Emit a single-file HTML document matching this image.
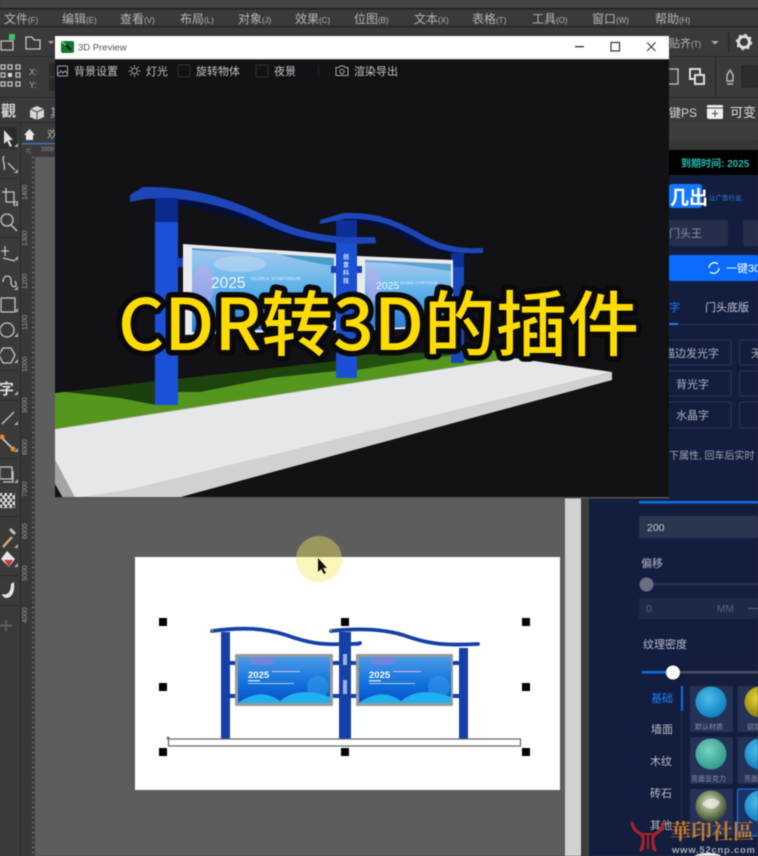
<!DOCTYPE html>
<html lang="zh"><head><meta charset="utf-8"><title>CDR转3D的插件</title>
<style>
html,body{margin:0;padding:0;background:#3a3a3a;width:758px;height:856px;overflow:hidden}
svg{display:block;position:absolute;left:0;top:0;filter:blur(.6px)}
text{font-family:"Liberation Sans","Noto Sans CJK SC",sans-serif}
.m{font-size:12px;fill:#b4b4b4}
.r{font-size:7px;fill:#9a9a9a}
.p{font-size:11px;fill:#b9bcc8}
.ic{fill:none;stroke:#c4c4c4;stroke-width:1.3}
</style></head><body>
<svg width="758" height="856" viewBox="0 0 758 856" xmlns="http://www.w3.org/2000/svg">
<defs>
<linearGradient id="bd" x1="0" y1="0" x2="0" y2="1"><stop offset="0" stop-color="#a9c6ee"/><stop offset=".3" stop-color="#78bdec"/><stop offset=".6" stop-color="#4aa6e8"/><stop offset="1" stop-color="#2b78d8"/></linearGradient>
<linearGradient id="bd2" x1="0" y1="0" x2="0" y2="1"><stop offset="0" stop-color="#4a9be8"/><stop offset=".6" stop-color="#0f6fdc"/><stop offset="1" stop-color="#0a4fc4"/></linearGradient>
<radialGradient id="s1" cx=".42" cy=".38" r=".62"><stop offset="0" stop-color="#4cbce8"/><stop offset="1" stop-color="#0f80c4"/></radialGradient>
<radialGradient id="s2" cx=".42" cy=".38" r=".62"><stop offset="0" stop-color="#e8d83a"/><stop offset="1" stop-color="#8a7c08"/></radialGradient>
<radialGradient id="s3" cx=".42" cy=".38" r=".62"><stop offset="0" stop-color="#78d4c4"/><stop offset="1" stop-color="#329a8c"/></radialGradient>
<radialGradient id="s4" cx=".45" cy=".4" r=".6"><stop offset="0" stop-color="#d8e0cc"/><stop offset=".6" stop-color="#7c8c62"/><stop offset="1" stop-color="#3d4a32"/></radialGradient>
<clipPath id="win"><rect x="55" y="59" width="614" height="439"/></clipPath>
<filter id="noise" x="0" y="0" width="100%" height="100%"><feTurbulence type="fractalNoise" baseFrequency=".9" numOctaves="2" seed="4"/><feColorMatrix values="0 0 0 0 .1  0 0 0 0 .25  0 0 0 0 .05  0 0 0 1.1 -.5"/><feComposite in2="SourceGraphic" operator="in"/><feMerge><feMergeNode in="SourceGraphic"/><feMergeNode/></feMerge></filter>
</defs>

<!-- app chrome -->
<rect width="758" height="856" fill="#3a3a3a"/>
<rect y="0" width="758" height="8" fill="#444"/>
<rect y="8" width="758" height="1.5" fill="#1f1f1f"/>
<rect y="26" width="758" height="1.5" fill="#262626"/>
<rect y="56" width="758" height="1" fill="#2a2a2a"/>
<rect y="97" width="758" height="1" fill="#2a2a2a"/>
<rect y="122" width="758" height="1.5" fill="#2a2a2a"/>
<g class="m">
<text x="4" y="23" class="m">文件<tspan font-size="8">(F)</tspan></text>
<text x="62" y="23" class="m">编辑<tspan font-size="8">(E)</tspan></text>
<text x="120" y="23" class="m">查看<tspan font-size="8">(V)</tspan></text>
<text x="180" y="23" class="m">布局<tspan font-size="8">(L)</tspan></text>
<text x="238" y="23" class="m">对象<tspan font-size="8">(J)</tspan></text>
<text x="295" y="23" class="m">效果<tspan font-size="8">(C)</tspan></text>
<text x="354" y="23" class="m">位图<tspan font-size="8">(B)</tspan></text>
<text x="414" y="23" class="m">文本<tspan font-size="8">(X)</tspan></text>
<text x="472" y="23" class="m">表格<tspan font-size="8">(T)</tspan></text>
<text x="532" y="23" class="m">工具<tspan font-size="8">(O)</tspan></text>
<text x="592" y="23" class="m">窗口<tspan font-size="8">(W)</tspan></text>
<text x="655" y="23" class="m">帮助<tspan font-size="8">(H)</tspan></text>
</g>
<!-- top toolbar left -->
<path class="ic" d="M1 41h8l4 0v9H1z"/><rect x="9" y="34" width="6" height="6" fill="#3fc060"/>
<path class="ic" stroke-width="1.8" d="M26 37h6l2 3h6v9H26z"/>
<path d="M48 41h6l-3 3z" fill="#aaa"/>
<g class="ic" stroke-width="1"><rect x="1" y="65" width="4" height="4"/><rect x="8" y="65" width="4" height="4"/><rect x="16" y="65" width="4" height="4"/><rect x="1" y="73" width="4" height="4"/><rect x="16" y="73" width="4" height="4"/><rect x="1" y="82" width="4" height="4"/><rect x="8" y="82" width="4" height="4"/><rect x="16" y="82" width="4" height="4"/></g>
<rect x="8" y="73" width="4" height="4" fill="#ddd"/>
<text x="29" y="75" font-size="9" fill="#aaa">X:</text><text x="29" y="88" font-size="9" fill="#aaa">Y:</text>
<rect x="49" y="63" width="6" height="13" fill="#2a2a2a"/><rect x="49" y="78" width="6" height="13" fill="#2a2a2a"/>
<text x="1" y="116" font-size="15" font-weight="700" fill="#d8d8d8">觀</text>
<path d="M37 106l7 3v8l-7 3-7-3v-8z" fill="#d6d6d6"/><path d="M30 109l7 3 7-3M37 112v8" stroke="#444" fill="none"/>
<text x="50" y="117" font-size="12" fill="#8ac">其</text>
<!-- top toolbar right -->
<text x="669" y="47" font-size="11" fill="#b4b4b4">贴齐<tspan font-size="8">(T)</tspan></text>
<path d="M711 41h8l-4 3.5z" fill="#aaa"/>
<rect x="728" y="32" width="1.5" height="20" fill="#2a2a2a"/>
<circle cx="744" cy="42" r="5.5" fill="none" stroke="#ddd" stroke-width="3"/><circle cx="744" cy="42" r="7.5" fill="none" stroke="#ddd" stroke-width="1.5" stroke-dasharray="2.5 3.4"/>
<path class="ic" d="M669 69h9v15h-9"/><rect x="690" y="69" width="10" height="10" fill="none" stroke="#ddd" stroke-width="2"/><rect x="695" y="75" width="9" height="9" fill="#3a3a3a" stroke="#ddd" stroke-width="2"/>
<rect x="715" y="56" width="1.5" height="40" fill="#2a2a2a"/>
<path d="M730 70l3 5v6h-6v-6zM727 84h6" fill="none" stroke="#bbb" stroke-width="1.4"/>
<rect x="742" y="66" width="16" height="21" rx="1" fill="#2c2c2c" stroke="#222"/>
<text x="669" y="117" font-size="12" fill="#cfd8dc">键PS</text>
<path d="M708 105h14a1 1 0 011 1v11a2 2 0 01-2 2h-12a2 2 0 01-2-2v-11a1 1 0 011-1z" fill="#eee"/><path d="M707 108h16M715 110v7M712 113.500h6" stroke="#444" fill="none"/>
<text x="730" y="117" font-size="13" fill="#ddd">可变</text>
<rect x="669" y="122" width="89" height="22" fill="#3d3d3d"/>

<!-- left tools -->
<rect x="0" y="123" width="21" height="733" fill="#3a3a3a"/>
<rect x="20" y="123" width="1.500" height="733" fill="#2a2a2a"/>
<rect x="0" y="127" width="17" height="22" fill="#2b2b2b"/>
<path d="M4 130l0 14 3-3 3 6 2-1-3-6 4 0z" fill="#ddd"/>
<g class="ic" stroke-width="1.500">
<path d="M4 156c-3 4 2 8 0 14M8 163l7 7"/>
<path d="M6 188v14h12M2 192h12v14"/>
<circle cx="7" cy="220" r="6"/><path d="M11 225l6 6"/>
<path d="M5 246v10M1 251h8M3 258l12 3"/>
<path d="M3 282c0-8 9-8 8 0 0 7 8 6 4-1"/>
<rect x="1" y="298" width="14" height="14"/>
<circle cx="7" cy="330" r="7"/>
<path d="M3 348h8l4 7-4 8H3l-4-8z"/>
<path d="M2 424l12-12"/>
<path d="M2 438l11 11" stroke-width="1.800"/>
<rect x="0" y="467" width="12" height="12"/><path d="M13 471v11H3"/>
<path d="M3 547l9-10" stroke="#d8a070" stroke-width="2.500"/><path d="M10 529l5 5" stroke-width="3"/>
</g>
<circle cx="2" cy="437" r="2.500" fill="#e88a2a"/><circle cx="13" cy="449" r="2.500" fill="#e88a2a"/>
<text x="-1" y="394" font-size="15" font-weight="700" fill="#ddd">字</text>
<rect x="0" y="493" width="15" height="15" fill="#ddd"/>
<g fill="#3a3a3a"><rect x="2" y="493" width="2.500" height="2.500"/><rect x="7" y="493" width="2.500" height="2.500"/><rect x="12" y="493" width="2.500" height="2.500"/><rect x="0" y="496" width="2.500" height="2.500"/><rect x="5" y="496" width="2.500" height="2.500"/><rect x="10" y="496" width="2.500" height="2.500"/><rect x="2" y="499" width="2.500" height="2.500"/><rect x="7" y="499" width="2.500" height="2.500"/><rect x="12" y="499" width="2.500" height="2.500"/><rect x="0" y="502" width="2.500" height="2.500"/><rect x="5" y="502" width="2.500" height="2.500"/><rect x="10" y="502" width="2.500" height="2.500"/><rect x="2" y="505" width="2.500" height="2.500"/><rect x="7" y="505" width="2.500" height="2.500"/><rect x="12" y="505" width="2.500" height="2.500"/></g>
<path d="M7 551l8 8-6 8-8-8z" fill="#e4e4e4"/><path d="M4 560h9l-4 7z" fill="#c83a3a"/>
<path d="M2 594c6 2 9-3 9-10l3-2c1 8-1 15-7 16-3 0-5-2-5-4z" fill="#e4e4e4"/>
<path d="M6 620v11M0 625.500h12" stroke="#5e5e5e" stroke-width="2"/>
<g fill="#2a2a2a"><rect y="178" width="18" height="1"/><rect y="237" width="18" height="1"/><rect y="370" width="18" height="1"/><rect y="400" width="18" height="1"/><rect y="458" width="18" height="1"/><rect y="516" width="18" height="1"/><rect y="575" width="18" height="1"/><rect y="605" width="18" height="1"/></g>
<g fill="#aaa"><path d="M18 147v-4l-4 4zM18 173v-4l-4 4zM18 206v-4l-4 4zM18 260v-4l-4 4zM18 290v-4l-4 4zM18 312v-4l-4 4zM18 337v-4l-4 4zM18 363v-4l-4 4zM18 395v-4l-4 4zM18 425v-4l-4 4zM18 452v-4l-4 4zM18 483v-4l-4 4zM18 548v-4l-4 4zM18 567v-4l-4 4z"/></g>

<!-- tab + ruler -->
<rect x="21" y="123" width="544" height="22" fill="#3a3a3a"/>
<path d="M24 135l5.500-6 5.500 6h-2v5h-7v-5z" fill="#e8e8e8"/>
<text x="47" y="138" font-size="11" fill="#aaa">欢</text>
<rect x="22" y="143" width="34" height="1.300" fill="#3a7ec4"/>
<rect x="21" y="145" width="34" height="12" fill="#3a3a3a"/>
<text x="41" y="151" font-size="6" fill="#999">2000</text>
<path d="M27 149l4 5M27 149h4M27 149v4" stroke="#777" fill="none" stroke-width=".7"/>
<rect x="21" y="157" width="14" height="699" fill="#383838"/>
<path d="M33 157V856" stroke="#888" stroke-width="2" stroke-dasharray="1 4"/>
<g class="r">
<text transform="translate(27 200) rotate(-90)">1400</text>
<text transform="translate(27 246) rotate(-90)">1300</text>
<text transform="translate(27 289) rotate(-90)">1200</text>
<text transform="translate(27 330) rotate(-90)">1100</text>
<text transform="translate(27 372) rotate(-90)">1000</text>
<text transform="translate(27 413) rotate(-90)">9000</text>
<text transform="translate(27 455) rotate(-90)">8000</text>
<text transform="translate(27 497) rotate(-90)">7000</text>
<text transform="translate(27 539) rotate(-90)">6000</text>
<text transform="translate(27 581) rotate(-90)">5000</text>
<text transform="translate(27 623) rotate(-90)">4000</text>
</g>

<!-- canvas -->
<rect x="35" y="157" width="530" height="699" fill="#5d5d5d"/>
<rect x="135" y="557" width="425" height="233" fill="#fff"/>
<rect x="565" y="140" width="16" height="716" fill="#d1d1d1"/>
<rect x="581" y="140" width="8" height="716" fill="#3d3d3d"/>

<!-- drawing on the page -->
<g fill="#1440a8">
<rect x="221" y="632" width="9" height="107"/><rect x="339" y="632" width="12" height="107"/><rect x="459" y="648" width="9" height="91"/>
<rect x="230" y="661" width="6" height="4"/><rect x="230" y="694" width="6" height="4"/><rect x="333" y="661" width="6" height="4"/><rect x="333" y="694" width="6" height="4"/><rect x="351" y="661" width="6" height="4"/><rect x="351" y="694" width="6" height="4"/><rect x="453" y="661" width="6" height="4"/><rect x="453" y="694" width="6" height="4"/>
</g>
<g fill="none" stroke="#1440a8" stroke-width="3.800" stroke-linecap="round">
<path d="M212 631c30-4 52-3 74 4 22 8 36 10 57 9 10 0 17 0 17-1"/>
<path d="M331 631c28-3 52-2 72 4 22 8 38 11 75 9"/>
</g>
<rect x="343" y="654" width="4" height="11" fill="#cfe0ff" opacity=".7"/><rect x="343" y="680" width="4" height="14" fill="#cfe0ff" opacity=".7"/>
<circle cx="212" cy="630" r="1.500" fill="#888"/><circle cx="331" cy="630" r="1.500" fill="#888"/><circle cx="168" cy="738" r="1.500" fill="#777"/>
<rect x="235" y="654" width="98" height="52" fill="#9a9a9a"/><rect x="238" y="657" width="92" height="46" fill="url(#bd2)"/>
<rect x="356" y="654" width="97" height="52" fill="#9a9a9a"/><rect x="359" y="657" width="92" height="46" fill="url(#bd2)"/>
<ellipse cx="262" cy="661" rx="14" ry="4" fill="#a078d8" opacity=".5"/><ellipse cx="383" cy="661" rx="14" ry="4" fill="#a078d8" opacity=".5"/>
<circle cx="318" cy="687" r="11" fill="#3aa2ee" opacity=".5"/><circle cx="439" cy="687" r="11" fill="#3aa2ee" opacity=".5"/>
<path d="M238 703c14-10 28-12 42-2 12-10 28-12 50-4v6z" fill="#1fb0f0"/>
<path d="M359 703c14-10 28-12 42-2 12-10 28-12 50-4v6z" fill="#1fb0f0"/>
<text x="248" y="678" font-size="9.500" font-weight="700" fill="#fff">2025</text>
<text x="369" y="678" font-size="9.500" font-weight="700" fill="#fff">2025</text>
<rect x="248" y="680" width="12" height="1.500" fill="#cde"/><rect x="248" y="683" width="46" height="1" fill="#bcd"/><rect x="272" y="671" width="28" height="1" fill="#dbe"/>
<rect x="369" y="680" width="12" height="1.500" fill="#cde"/><rect x="369" y="683" width="46" height="1" fill="#bcd"/><rect x="393" y="671" width="28" height="1" fill="#dbe"/>
<rect x="168.500" y="739" width="352" height="7" fill="#fff" stroke="#666" stroke-width="1.200"/>
<g fill="#000">
<rect x="159" y="618" width="8" height="8"/><rect x="341" y="618" width="8" height="8"/><rect x="522" y="618" width="8" height="8"/>
<rect x="159" y="683" width="8" height="8"/><rect x="522" y="683" width="8" height="8"/>
<rect x="159" y="748" width="8" height="8"/><rect x="341" y="748" width="8" height="8"/><rect x="522" y="748" width="8" height="8"/>
</g>
<!-- cursor highlight -->
<circle cx="319" cy="559" r="23" fill="#f2e65a" fill-opacity=".42"/>
<path d="M318 558v14l3-3 3 5 2-1-3-5h4z" fill="#111"/>

<!-- right panel -->
<rect x="589" y="140" width="169" height="716" fill="#131e3e"/>
<rect x="669" y="140" width="89" height="10" fill="#363636"/>
<rect x="669" y="150" width="89" height="25" fill="#000"/>
<text x="681" y="167" font-size="10" font-weight="700" fill="#25b8b0">到期时间: 2025</text>
<rect x="669" y="184" width="33" height="24" rx="3" fill="#1677ff"/>
<text x="670" y="204" font-size="19" font-weight="700" fill="#fff">几出</text>
<text x="709" y="200" font-size="6.500" fill="#2f86e8">让广告行业,</text>
<rect x="669" y="220" width="59" height="26" rx="2" fill="#252e4b"/>
<text x="669" y="237" font-size="11" fill="#8c92a6">门头王</text>
<rect x="743" y="220" width="15" height="26" rx="2" fill="#252e4b"/>
<rect x="669" y="255" width="89" height="26" rx="2" fill="#0b6bff"/>
<path d="M709 268a5.500 5.500 0 019-4M719 268a5.500 5.500 0 01-9 4" fill="none" stroke="#fff" stroke-width="1.300"/>
<text x="726" y="272" font-size="11" fill="#fff">一键30</text>
<text x="669" y="311" font-size="11" fill="#1a7cff">字</text>
<text x="705" y="311" font-size="11" fill="#c2c5d0">门头底版</text>
<rect x="669" y="324" width="89" height="1" fill="#2b3553"/><rect x="669" y="323" width="9" height="2" fill="#1a7cff"/>
<g fill="none" stroke="#2b3553" stroke-width="1">
<rect x="660" y="340" width="71" height="25" rx="2"/><rect x="739.500" y="340" width="30" height="25" rx="2"/>
<rect x="660" y="371" width="71" height="25" rx="2"/><rect x="739.500" y="371" width="30" height="25" rx="2"/>
<rect x="660" y="402" width="71" height="26" rx="2"/><rect x="739.500" y="402" width="30" height="26" rx="2"/>
</g>
<text x="664" y="357" font-size="11" fill="#aeb2c0">描边发光字</text>
<text x="751" y="357" font-size="11" fill="#aeb2c0">无</text>
<text x="676" y="388" font-size="11" fill="#aeb2c0">背光字</text>
<text x="676" y="419" font-size="11" fill="#aeb2c0">水晶字</text>
<text x="669" y="459" font-size="10" fill="#9ea3b5">下属性, 回车后实时</text>

<rect x="639" y="501" width="119" height="2.500" fill="#0f6ee6"/>
<rect x="639" y="516" width="119" height="22" rx="2" fill="#2a3550"/>
<text x="647" y="531" font-size="10.500" fill="#c6c9d2">200</text>
<text x="641" y="567" font-size="11" fill="#b5b8c6">偏移</text>
<rect x="646" y="583" width="112" height="2.500" fill="#2a3350"/>
<circle cx="646.500" cy="584.500" r="7" fill="#6a6e82"/>
<rect x="639" y="598" width="119" height="21" rx="2" fill="#1e2947"/>
<text x="646" y="612" font-size="10.500" fill="#5d6479">0</text>
<text x="717" y="612" font-size="10" fill="#5d6479">MM</text>
<rect x="748" y="608" width="10" height="1" fill="#5d6479"/>
<text x="643" y="648" font-size="11" fill="#b9bcc8">纹理密度</text>
<rect x="642" y="671" width="116" height="2.500" fill="#4c4f62"/><rect x="642" y="671" width="30" height="2.500" fill="#0f6ee6"/>
<circle cx="673" cy="672.500" r="7" fill="#fff"/>
<rect x="681" y="686" width="1" height="170" fill="#1f2b4d"/><rect x="681" y="686" width="2" height="25" fill="#0f6ee6"/>
<text x="651" y="702" font-size="11" fill="#1a7cff">基础</text>
<text x="651" y="733" class="p">墙面</text>
<text x="650" y="765" class="p">木纹</text>
<text x="650" y="797" class="p">砖石</text>
<text x="650" y="829" class="p">其他</text>
<g fill="#253256">
<rect x="690" y="686" width="43" height="46" rx="2"/><rect x="737.500" y="686" width="43" height="46" rx="2"/>
<rect x="690" y="737" width="43" height="47" rx="2"/><rect x="737.500" y="737" width="43" height="47" rx="2"/>
<rect x="690" y="789" width="43" height="47" rx="2"/>
</g>
<rect x="737.500" y="789" width="43" height="47" rx="2" fill="#1c3260" stroke="#1a6ee8" stroke-width="1.300"/>
<circle cx="711" cy="702" r="15.500" fill="url(#s1)"/><circle cx="760" cy="702" r="15.500" fill="url(#s2)"/>
<circle cx="711" cy="754" r="15.500" fill="url(#s3)"/><circle cx="760" cy="754" r="15.500" fill="url(#s1)"/>
<circle cx="711" cy="806" r="15.500" fill="url(#s4)"/><circle cx="760" cy="806" r="15.500" fill="url(#s1)"/>
<path d="M702 804c5-6 12-8 18-2-3 8-12 9-18 2z" fill="#f0f2ea" opacity=".7"/>
<g font-size="7" fill="#8e93a8">
<text x="695" y="729">默认材质</text><text x="747" y="729">铝箔</text>
<text x="691" y="781">亮面亚克力</text><text x="744" y="781">亮面</text>
</g>
<ellipse cx="708" cy="857" rx="14" ry="4" fill="#eee"/>
<!-- watermark -->
<g fill="none" stroke="#ab2228" stroke-linecap="round">
<path d="M632 823c1 6 5 9 9 11 3 2 3 9 0 16" stroke-width="3"/>
<path d="M664 823c-1 6-5 9-9 11-3 2-3 9 0 16" stroke-width="3"/>
<path d="M642 834h12M648 835v14M643 840v9M653 840v9" stroke-width="2"/>
</g>
<text x="670" y="839" font-size="21" font-weight="700" fill="#c47a2e" style='font-family:"Noto Serif CJK SC","Liberation Serif",serif'>華印社區</text>
<text x="672" y="853" font-size="9.500" font-weight="700" textLength="83" fill="#a4a9b6">www.52cnp.com</text>

<!-- preview window -->
<rect x="55" y="59" width="614" height="439" fill="#111116"/>
<rect x="55" y="36" width="614" height="23" fill="#fff"/>
<rect x="55" y="58.500" width="614" height="1" fill="#bbb"/>
<rect x="61" y="41" width="13" height="12" rx="2" fill="#0c7a2a"/><path d="M64 43l7 7" stroke="#111" stroke-width="2"/><path d="M62 42l4 3" stroke="#7fe07f" stroke-width="1.500"/>
<text x="78" y="50.500" font-size="9.500" fill="#555">3D Preview</text>
<rect x="575" y="46" width="9" height="1.300" fill="#333"/>
<rect x="611" y="42.500" width="8.500" height="8.500" fill="none" stroke="#333" stroke-width="1.200"/>
<path d="M647 42.500l8.500 8.500M655.500 42.500l-8.500 8.500" stroke="#333" stroke-width="1.100"/>
<g font-size="11" fill="#c2c2c2">
<text x="74" y="75">背景设置</text><text x="146" y="75">灯光</text><text x="196" y="75">旋转物体</text><text x="274" y="75">夜景</text><text x="354" y="75">渲染导出</text>
</g>
<g fill="none" stroke="#a8a8a8" stroke-width="1">
<rect x="57.500" y="66" width="10" height="10" rx="1"/><path d="M58 74l3-3 2 2 2-2 2 2"/>
<circle cx="134.500" cy="71" r="2.800"/><path d="M134.500 65v2M134.500 75v2M128.500 71h2M138.500 71h2M130.300 66.800l1.400 1.400M137.300 73.800l1.400 1.400M138.700 66.800l-1.400 1.400M131.700 73.800l-1.400 1.400"/>
<path d="M336 67.500h3l1-1.500h4l1 1.500h3v8h-12z"/><circle cx="342" cy="71.500" r="2.200"/>
</g>
<rect x="178" y="65" width="12" height="12" rx="1" fill="none" stroke="#333"/>
<rect x="256" y="65" width="12" height="12" rx="1" fill="none" stroke="#333"/>
<rect x="318" y="65" width="1" height="12" fill="#24242a"/>

<!-- 3D scene -->
<g clip-path="url(#win)">
<polygon points="55,393 178,380 336,362 497,350 513,358 55,429" fill="#55981f" filter="url(#noise)"/>
<polygon points="65,392 156,381 156,405 120,398" fill="#1c400d"/>
<polygon points="177,379 336,361 336,371 270,378 200,392 177,392" fill="#1e440e"/>
<polygon points="357,355 497,350 430,358 357,370" fill="#234f10"/>
<!-- roof 1 underside and top -->
<path d="M140 197C190 192 230 205 280 228 310 240 340 246 375 243L327 244C280 240 235 212 178 205Z" fill="#03103a"/>
<path d="M130 195L143 187C190 186 230 198 270 218 305 235 340 238 375 237L376 243C340 246 300 240 270 226 230 206 190 196 145 199L130 202Z" fill="#1d46b8"/>
<!-- post 1 -->
<rect x="155" y="198" width="23" height="207" fill="#1b50d8"/>
<rect x="155" y="198" width="23" height="24" fill="#0a2a8e"/>
<rect x="177" y="258" width="9" height="9" fill="#1a44b4"/>
<!-- board 1 -->
<polygon points="183,244 337,254 337,330 183,335" fill="#eaeaec"/>
<polygon points="192,248 334,258 334,328 192,332" fill="url(#bd)"/>
<path d="M192 248L334 258V266C315 263 298 260 275 253 245 252 215 252 192 250Z" fill="#2a8fb8" opacity=".7"/>
<ellipse cx="203" cy="285" rx="11" ry="20" fill="#c9a6ea" opacity=".55"/>
<ellipse cx="240" cy="264" rx="26" ry="8" fill="#c4dcf4" opacity=".5"/>
<text x="211" y="288" font-size="15.500" fill="#f4f8ff">2025</text>
<text x="251" y="280" font-size="4.800" fill="#e4f0ff">GLOBAL SYMPOSIUM</text>
<!-- post 2 with roof 2 -->
<path d="M330 222C370 215 400 225 430 245 445 252 465 254 483 253 450 256 430 254 400 235 380 224 355 222 330 222Z" fill="#03103a"/>
<rect x="451" y="253" width="13" height="110" fill="#1748bc"/>
<rect x="451" y="253" width="13" height="14" fill="#0d2f98"/>
<polygon points="357,256 453,260 453,327 357,331" fill="#eaeaec"/>
<polygon points="365,260 451,264 451,325 365,329" fill="url(#bd)"/>
<path d="M365 260L451 264V271C425 268 395 262 365 262Z" fill="#2a8fb8" opacity=".6"/>
<ellipse cx="373" cy="285" rx="7" ry="17" fill="#c9a6ea" opacity=".5"/>
<text x="376" y="289" font-size="10.500" fill="#f4f8ff">2025</text>
<text x="400" y="284" font-size="3.600" fill="#e4f0ff">GLOBAL SYMPOSIUM</text>
<rect x="336" y="220" width="21" height="158" fill="#1b50d4"/>
<rect x="336" y="220" width="21" height="22" fill="#0c2f9a"/>
<rect x="357" y="266" width="5" height="7" fill="#1a44b4"/><rect x="331" y="266" width="5" height="7" fill="#1a44b4"/>
<g font-size="6" font-weight="700" fill="#dde8ff"><text x="343" y="259">创</text><text x="343" y="267">意</text><text x="343" y="275">科</text><text x="343" y="283">技</text></g>
<path d="M320 220L343 213C380 212 400 222 425 236 445 247 465 249 483 248L483 253C460 254 440 252 420 240 395 225 375 218 345 219L320 224Z" fill="#1d46b8"/>
<path d="M300 231C325 237 350 238 375 237L376 243C350 245 325 243 300 236Z" fill="#1d46b8"/>
<!-- slab -->
<polygon points="55,429 513,358 612,372 127,491 75,498 55,460" fill="#e6e7e9"/>
<polygon points="612,372 612,380 177,498 75,498 127,490" fill="#d0d1d4"/>
<polygon points="55,460 75,498 63,498 55,484" fill="#a3a4a6"/>
<path d="M55 429L513 358" stroke="#8da070" stroke-width="1" opacity=".6"/>
</g>
<rect x="55" y="497" width="614" height="1.500" fill="#555"/>

<!-- headline -->
<text x="118" y="350" font-size="71" font-weight="500" textLength="521" lengthAdjust="spacingAndGlyphs" style='font-family:"Noto Sans CJK SC","Liberation Sans",sans-serif' fill="#ffdc00" stroke="#0a0a0a" stroke-width="11" stroke-linejoin="round" paint-order="stroke">CDR转3D的插件</text>
</svg>
</body></html>
